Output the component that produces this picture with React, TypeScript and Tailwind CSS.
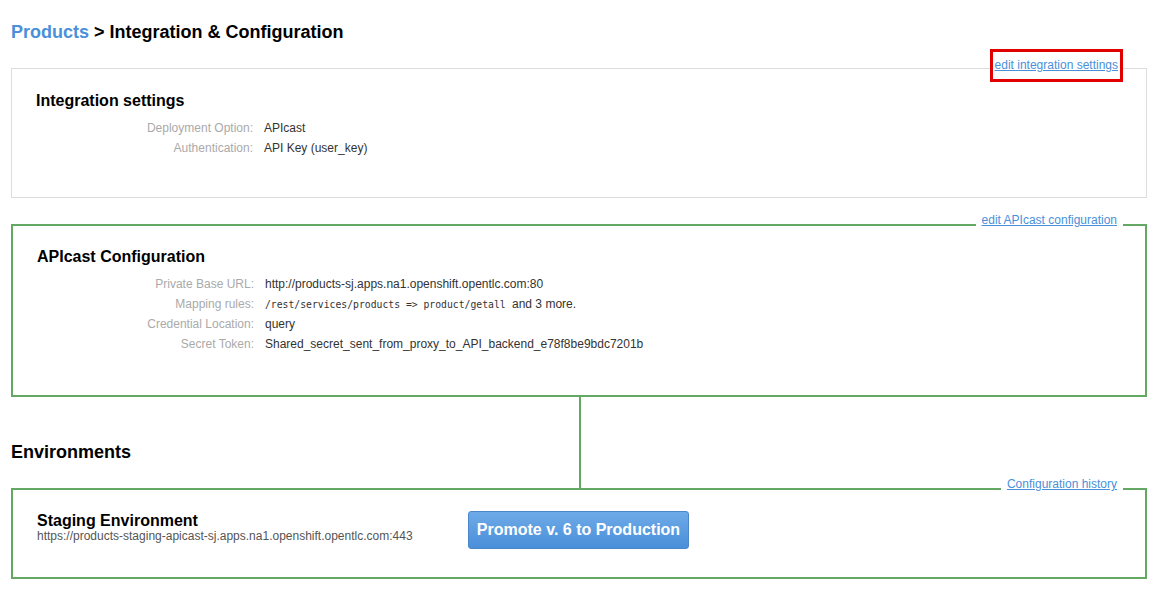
import React from "react";

const Row = ({ label, children }: { label: string; children: React.ReactNode }) => (
  <div className="flex h-[20px] items-center">
    <div className="w-[228px] pr-[11px] text-right text-[12px] text-[#aaaaaa]">{label}</div>
    <div className="text-[12px] text-[#333333]">{children}</div>
  </div>
);

export default function App() {
  return (
    <div
      className="min-h-[597px] w-[1164px] bg-white pl-[11px] pr-[17px]"
      style={{ fontFamily: '"Liberation Sans", Arial, sans-serif' }}
    >
      <h1 className="pt-[21px] text-[18px] font-bold leading-[22px] text-black">
        <span className="text-[#4a90d9]">Products</span> &gt; Integration &amp; Configuration
      </h1>

      {/* Integration settings box */}
      <div className="relative mt-[25px] h-[130px] border border-[#dddddd] pl-[24px] pt-[22px]">
        <div className="absolute right-[23px] top-[-20px] border-[3px] border-[#e00000] bg-white px-[1px] pb-[6px] pt-[5px]">
          <a href="#" className="block px-[1px] text-[12px] leading-[16px] text-[#4a90d9] underline">
            edit integration settings
          </a>
        </div>
        <h2 className="text-[16px] font-bold leading-[20px] text-black">Integration settings</h2>
        <div className="mt-[7px]">
          <Row label="Deployment Option:">APIcast</Row>
          <Row label="Authentication:">API Key (user_key)</Row>
        </div>
      </div>

      {/* APIcast configuration box */}
      <div className="relative mt-[26px] h-[173px] border-2 border-[#63a863] pl-[24px] pt-[21px]">
        <a
          href="#"
          className="absolute right-[22px] top-[-14px] bg-white px-[6px] text-[12px] leading-[16px] text-[#4a90d9] underline"
        >
          edit APIcast configuration
        </a>
        <h2 className="text-[16px] font-bold leading-[20px] text-black">APIcast Configuration</h2>
        <div className="mt-[7px]">
          <Row label="Private Base URL:">http://products-sj.apps.na1.openshift.opentlc.com:80</Row>
          <Row label="Mapping rules:">
            <span
              className="mr-[3px] text-[9.75px] text-[#333]"
              style={{ fontFamily: '"DejaVu Sans Mono", monospace' }}
            >
              /rest/services/products =&gt; product/getall
            </span>{" "}
            and 3 more.
          </Row>
          <Row label="Credential Location:">query</Row>
          <Row label="Secret Token:">Shared_secret_sent_from_proxy_to_API_backend_e78f8be9bdc7201b</Row>
        </div>
      </div>

      {/* Connector + Environments */}
      <div className="flex h-[91px]">
        <div className="flex w-[568px] items-end pb-[25px]">
          <h2 className="text-[18px] font-bold leading-[22px] text-black">Environments</h2>
        </div>
        <div className="w-[2px] bg-[#63a863]" />
      </div>

      {/* Staging environment box */}
      <div className="relative flex h-[91px] items-start border-2 border-[#63a863] pl-[24px] pt-[21px]">
        <a
          href="#"
          className="absolute right-[22px] top-[-14px] bg-white px-[6px] text-[12px] leading-[16px] text-[#4a90d9] underline"
        >
          Configuration history
        </a>
        <div className="w-[431px] pt-[1px]">
          <div className="text-[16px] font-bold leading-[17px] text-black">Staging Environment</div>
          <div className="text-[12px] leading-[14px] text-[#555555]">
            https://products-staging-apicast-sj.apps.na1.openshift.opentlc.com:443
          </div>
        </div>
        <button className="h-[38px] w-[221px] rounded-[3px] border border-[#4a86c8] bg-gradient-to-b from-[#6eaae8] to-[#4a8fd9] text-[16px] font-bold text-white">
          Promote v. 6 to Production
        </button>
      </div>
    </div>
  );
}
